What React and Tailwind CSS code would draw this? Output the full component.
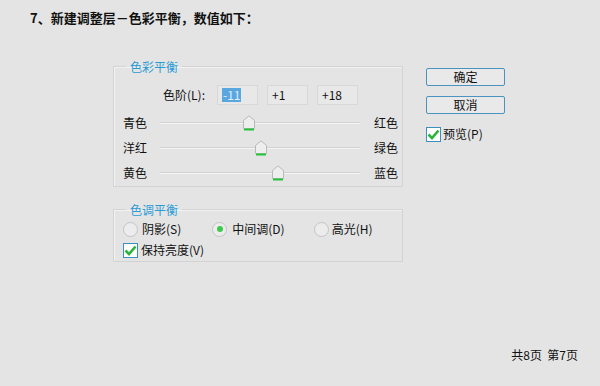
const font = { fontFamily: '"Noto Sans CJK SC", "Liberation Sans", sans-serif' };

const sliders = [
  { left: "青色", right: "红色", value: -11 },
  { left: "洋红", right: "绿色", value: 1 },
  { left: "黄色", right: "蓝色", value: 18 },
];

const Check = () => (
  <span className="w-[15px] h-[15px] border border-[#3d8fc0] bg-white flex items-center justify-center">
    <svg width="13" height="11" viewBox="0 0 13 11">
      <path d="M1.5 5.5 L5 9 L11.5 1.5" stroke="#2bb43a" strokeWidth="2.6" fill="none" />
    </svg>
  </span>
);

const Radio = ({ on }) => (
  <span className="w-[15px] h-[15px] rounded-full border border-[#c4c4c4] bg-[#ececec] flex items-center justify-center">
    {on && <span className="w-[6px] h-[6px] rounded-full bg-[#3ec94b]" />}
  </span>
);

const Thumb = () => (
  <svg width="12" height="16" viewBox="0 0 12 16">
    <path d="M0.5 13.5 V5.5 L6 0.8 L11.5 5.5 V13.5 Z" fill="#eeeeee" stroke="#b8b8b8" />
    <rect x="1" y="13.5" width="10" height="2" fill="#23c43a" />
  </svg>
);

const SliderRow = ({ left, right, value }) => (
  <div className="flex items-center h-[25px]">
    <span className="w-[37px]">{left}</span>
    <div className="relative w-[200px] h-[16px]">
      <div className="absolute left-0 right-0 top-[7px] h-[2px] border-t border-[#d2d2d2] border-b border-b-[#f4f4f4]" />
      <div className="absolute top-0" style={{ left: 100 + value - 6 }}>
        <Thumb />
      </div>
    </div>
    <span className="ml-auto mr-[4px]">{right}</span>
  </div>
);

const App = () => {
  return (
    <div className="w-[600px] h-[386px] bg-[#e4e4e4] text-[12px] text-[#111] flex flex-col" style={font}>
      <div className="pl-[30px] pt-[8px] h-[30px] text-[13px] font-bold leading-[20px]">
        7、新建调整层－色彩平衡，数值如下：
      </div>

      <div className="flex ml-[113px] mt-[38px]">
        <div className="w-[290px] flex flex-col">
          <fieldset className="h-[127px] -mt-[8px] border border-[#d3d3d3] shadow-[inset_1px_1px_0_#f2f2f2] pl-[9px]">
            <legend className="ml-[3px] px-[4px] text-[#2a9bd3] leading-[13px]">色彩平衡</legend>
            <div className="flex items-center mt-[12px] h-[20px]">
              <span className="ml-[40px] w-[54px]">色阶(L):</span>
              <div className="w-[41px] h-[20px] bg-[#e8e8e8] border border-[#d8d8d8] flex items-center pl-[4px]">
                <span className="bg-[#5aa7e0] text-[#dbeeff] px-[1px] leading-[14px]">-11</span>
              </div>
              <div className="w-[41px] h-[20px] ml-[9px] bg-[#e8e8e8] border border-[#d8d8d8] flex items-center pl-[4px]">+1</div>
              <div className="w-[41px] h-[20px] ml-[9px] bg-[#e8e8e8] border border-[#d8d8d8] flex items-center pl-[4px]">+18</div>
            </div>
            <div className="mt-[5px] flex flex-col">
              {sliders.map((s) => (
                <SliderRow key={s.left} {...s} />
              ))}
            </div>
          </fieldset>

          <fieldset className="h-[59px] mt-[16px] border border-[#d3d3d3] shadow-[inset_1px_1px_0_#f2f2f2] pl-[9px]">
            <legend className="ml-[3px] px-[4px] text-[#2a9bd3] leading-[13px]">色调平衡</legend>
            <div className="flex items-center h-[18px] mt-[4px]">
              <Radio />
              <span className="ml-[4px]">阴影(S)</span>
              <span className="ml-[31px]"><Radio on /></span>
              <span className="ml-[5px]">中间调(D)</span>
              <span className="ml-[29px]"><Radio /></span>
              <span className="ml-[3px]">高光(H)</span>
            </div>
            <div className="flex items-center h-[18px] mt-[3px]">
              <Check />
              <span className="ml-[3px]">保持亮度(V)</span>
            </div>
          </fieldset>
        </div>

        <div className="ml-[23px] flex flex-col">
          <button className="w-[79px] h-[18px] border border-[#4b93bf] rounded-[2px] bg-[#e9e9e9] leading-[16px]">确定</button>
          <button className="w-[79px] h-[18px] mt-[10px] border border-[#4b93bf] rounded-[2px] bg-[#e9e9e9] leading-[16px]">取消</button>
          <div className="flex items-center mt-[11px]">
            <Check />
            <span className="ml-[2px]">预览(P)</span>
          </div>
        </div>
      </div>

      <div className="mt-auto mb-[24px] self-end mr-[22px] leading-[14px]">共8页&nbsp;&nbsp;第7页</div>
    </div>
  );
};

export default App;
